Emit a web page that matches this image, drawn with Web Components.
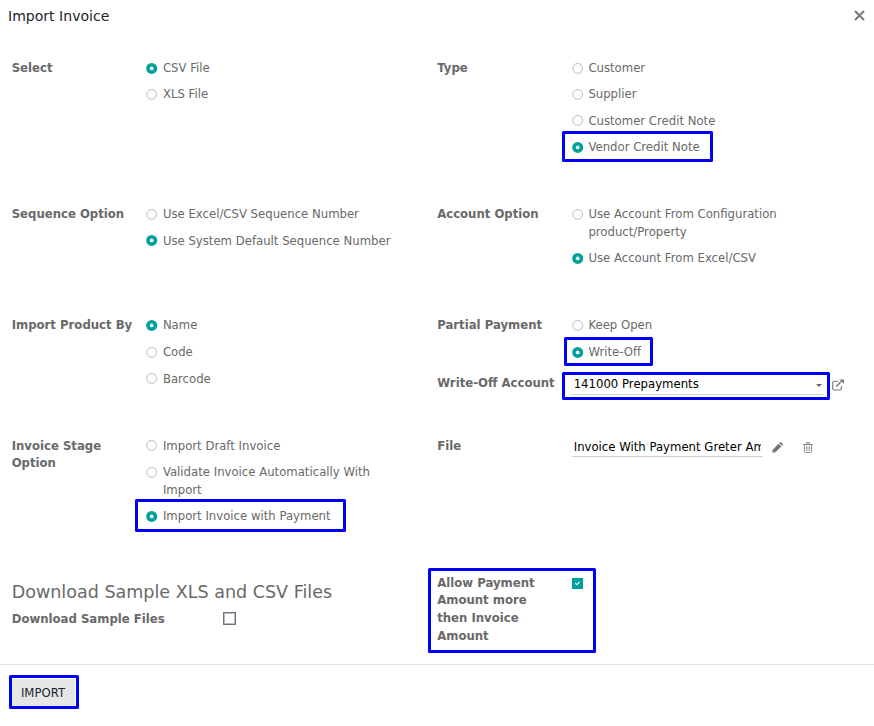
<!DOCTYPE html>
<html lang="en">
<head>
<meta charset="utf-8">
<title>Import Invoice</title>
<style>
  body { margin: 0; background: #fff; font-family: "DejaVu Sans", sans-serif; font-size: 11.7px; line-height: 17.6px; color: #696969; }
</style>
</head>
<body>
<import-dialog></import-dialog>
<script>
class BaseElement extends HTMLElement {
  connectedCallback() {
    if (this.shadowRoot) return;
    this.attachShadow({ mode: "open" }).innerHTML = this.render();
  }
}

customElements.define("highlight-frame", class extends BaseElement {
  render() {
    return `<style>
      :host { position: absolute; box-sizing: border-box; border: 3px solid #0000fb; border-radius: 1.5px; pointer-events: none; }
    </style>`;
  }
});

customElements.define("radio-option", class extends BaseElement {
  render() {
    return `<style>
      :host { display: grid; grid-template-columns: 11px 1fr; column-gap: 5.7px; position: relative; }
      svg { display: block; width: 11px; height: 11px; margin-top: 2.6px; overflow: visible; }
      .on { display: none; }
      :host([checked]) .on { display: inline; }
      :host([checked]) .off { display: none; }
    </style><svg viewBox="0 0 11 11"><circle class="off" cx="5.7" cy="5.4" r="4.9" fill="#fff" stroke="#b3bbc4"/><g class="on"><circle cx="5.7" cy="5.4" r="5.5" fill="#00a09d"/><circle cx="5.7" cy="5.4" r="1.9" fill="#edf6f6"/></g></svg><span><slot></slot></span><slot name="frame"></slot>`;
  }
});

customElements.define("form-field", class extends BaseElement {
  render() {
    return `<style>
      :host { display: grid; grid-template-columns: var(--label, 134.5px) 1fr; position: relative; align-items: start; }
      b { font-weight: bold; }
      div { display: grid; row-gap: var(--gap, 8.8px); }
    </style><b>${this.getAttribute("label")}</b><div><slot></slot></div><slot name="frame"></slot>`;
  }
});

customElements.define("check-box", class extends BaseElement {
  render() {
    return `<style>
      :host { display: block; box-sizing: border-box; width: 13px; height: 13px; border: 1px solid #6c757d; box-shadow: inset 0 0 0 1px #b4bac2; background: #fff; }
      :host([checked]) { width: 11px; height: 11px; border: 0; box-shadow: none; background: #00a09d; }
      svg { display: none; width: 11px; height: 11px; }
      :host([checked]) svg { display: block; }
    </style><svg viewBox="0 0 11 11"><path d="M3.3 5.3l1.5 1.4 2.8-2.8" fill="none" stroke="#e8f6f6" stroke-width="1.2"/></svg>`;
  }
});

customElements.define("select-field", class extends BaseElement {
  render() {
    return `<style>
      :host { display: flex; align-items: center; position: relative; color: #000; height: 20px; }
      .v { box-sizing: border-box; width: 251px; height: 20px; padding: 1px 1px 0 2px; display: flex; align-items: center; justify-content: space-between; border-bottom: 1px solid #d0d3d6; }
      .c { border: 3px solid transparent; border-top-color: #666; border-bottom: 0; margin-top: 1px; }
      .e { margin-left: 9px; width: 12px; height: 12px; }
    </style><div class="v"><slot></slot><span class="c"></span></div>
    <svg class="e" viewBox="0 0 12 12" fill="none" stroke="#727c86" stroke-width="1.1"><path d="M6.4 2.2H2.2Q.7 2.2.7 3.7v5.8q0 1.5 1.5 1.5h5.6q1.5 0 1.5-1.5V7"/><path d="M4.2 7.5L10 1.8" stroke-width="1.5"/><path d="M7.6.4H12v4.4z" fill="#727c86" stroke="none"/></svg>
    <slot name="frame"></slot>`;
  }
});

customElements.define("file-field", class extends BaseElement {
  render() {
    return `<style>
      :host { display: flex; align-items: center; color: #000; height: 19px; }
      .n { box-sizing: border-box; width: 191px; height: 19px; padding: 1px 2px 0; border-bottom: 1px solid #ced1d4; }
      .t { display: block; overflow: hidden; white-space: nowrap; }
      svg { display: block; }
      .p { margin-left: 9.5px; width: 11px; height: 11px; }
      .d { margin-left: 19.5px; width: 10px; height: 11px; }
    </style><div class="n"><span class="t"><slot></slot></span></div>
    <svg class="p" viewBox="0 0 11 11" fill="#6c757d"><path d="M.4 10.6V7.9L6.6 1.7 9.3 4.4 3.1 10.6zM7.2 1.1L8 .3q.5-.4 1 0L10.7 2q.4.5 0 1l-.8.8z"/><path d="M1.4 8.6l1 1" stroke="#fff" stroke-width=".6"/></svg>
    <svg class="d" viewBox="0 0 10 11" fill="none" stroke="#808890" stroke-width="1"><path d="M0 2.5h10M3 2.3L3.5.6h3L7 2.3M1.4 2.5v6.7q0 1.2 1 1.2h5.2q1 0 1-1.2V2.5" /><path d="M3.5 4.3v4.3M5 4.3v4.3M6.5 4.3v4.3" stroke-width=".7"/></svg>`;
  }
});

customElements.define("import-dialog", class extends BaseElement {
  render() {
    return `<style>
      :host { display: flex; flex-direction: column; width: 874px; height: 726px; overflow: hidden; }
      header { display: flex; justify-content: space-between; height: 60px; box-sizing: border-box; padding: 8px 9.5px 0 8px; font-size: 14.05px; color: #212529; }
      header svg { width: 11px; height: 11px; margin-top: 2px; }
      main { display: grid; grid-template-columns: 425.5px 1fr; grid-template-rows: 146.3px 111px 120.5px 137px 1fr; height: 604px; padding-left: 11.7px; box-sizing: border-box; }
      .l { padding-right: 34px; }
      .r { padding-right: 30px; }
      .w { margin-top: 13px; }
      h2 { margin: 7px 0 9px; font-size: 17.55px; line-height: 20px; font-weight: normal; }
      footer { flex: 1; border-top: 1px solid #dee2e6; padding: 14px 0 0 12px; }
      button { position: relative; display: block; width: 63px; height: 27px; padding: 2px 1px 0 0; border: 0; background: #e6e6e6; font: inherit; font-size: 11.7px; color: #212529; }
    </style>
    <header><span>Import Invoice</span>
      <svg viewBox="0 0 11 11" stroke="#777" stroke-width="2"><path d="M1 1l9 9M10 1l-9 9"/></svg></header>
    <main>
      <div class="l"><form-field label="Select">
        <radio-option checked>CSV File</radio-option>
        <radio-option>XLS File</radio-option>
      </form-field></div>
      <div class="r"><form-field label="Type">
        <radio-option>Customer</radio-option>
        <radio-option>Supplier</radio-option>
        <radio-option>Customer Credit Note</radio-option>
        <radio-option checked>Vendor Credit Note<highlight-frame slot="frame" style="left:-10px;top:-8px;width:151px;height:31px"></highlight-frame></radio-option>
      </form-field></div>
      <div class="l"><form-field label="Sequence Option">
        <radio-option>Use Excel/CSV Sequence Number</radio-option>
        <radio-option checked>Use System Default Sequence Number</radio-option>
      </form-field></div>
      <div class="r"><form-field label="Account Option">
        <radio-option>Use Account From Configuration product/Property</radio-option>
        <radio-option checked>Use Account From Excel/CSV</radio-option>
      </form-field></div>
      <div class="l"><form-field label="Import Product By" style="--gap:9.2px">
        <radio-option checked>Name</radio-option>
        <radio-option>Code</radio-option>
        <radio-option>Barcode</radio-option>
      </form-field></div>
      <div class="r"><form-field label="Partial Payment" style="--gap:9.2px">
        <radio-option>Keep Open</radio-option>
        <radio-option checked>Write-Off<highlight-frame slot="frame" style="left:-8px;top:-7px;width:89px;height:29px"></highlight-frame></radio-option>
      </form-field>
      <form-field class="w" label="Write-Off Account">
        <select-field>141000 Prepayments<highlight-frame slot="frame" style="left:-10px;top:-3px;width:268px;height:28px"></highlight-frame></select-field>
      </form-field></div>
      <div class="l"><form-field label="Invoice Stage Option">
        <radio-option>Import Draft Invoice</radio-option>
        <radio-option>Validate Invoice Automatically With Import</radio-option>
        <radio-option checked>Import Invoice with Payment<highlight-frame slot="frame" style="left:-11px;top:-9px;width:211px;height:33px"></highlight-frame></radio-option>
      </form-field></div>
      <div class="r"><form-field label="File">
        <file-field>Invoice With Payment Greter Amount</file-field>
      </form-field></div>
      <div class="l"><h2>Download Sample XLS and CSV Files</h2>
        <form-field label="Download Sample Files" style="--label:211.5px"><check-box style="margin-top:1px"></check-box></form-field></div>
      <div class="r"><form-field label="Allow Payment<br>Amount more<br>then Invoice<br>Amount">
        <check-box checked style="margin-top:3px"></check-box>
        <highlight-frame slot="frame" style="left:-9px;top:-7px;width:168px;height:85px"></highlight-frame>
      </form-field></div>
    </main>
    <footer><button>IMPORT<highlight-frame style="left:-3px;top:-4px;width:70px;height:34px"></highlight-frame></button></footer>`;
  }
});
</script>
</body>
</html>
